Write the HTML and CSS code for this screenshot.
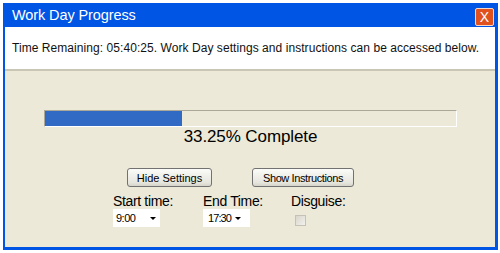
FILE: index.html
```html
<!DOCTYPE html>
<html>
<head>
<title>Work Day Progress</title>
<link rel="stylesheet" href="styles.css">
</head>
<body>
<div class="window">
  <div class="titlebar">
    <span class="title">Work Day Progress</span>
    <span class="close">X</span>
  </div>
  <div class="message">Time Remaining: 05:40:25. Work Day settings and instructions can be accessed below.</div>
  <div class="panel">
    <div class="track"><div class="fill" style="width: 33.25%"></div></div>
    <div class="percent">33.25% Complete</div>
    <div class="buttons">
      <button class="btn btn-hide">Hide Settings</button>
      <button class="btn btn-show">Show Instructions</button>
    </div>
    <div class="settings">
      <div class="field field-start">
        <div class="label">Start time:</div>
        <div class="select"><span>9:00</span><i class="arrow"></i></div>
      </div>
      <div class="field field-end">
        <div class="label">End Time:</div>
        <div class="select select-end"><span>17:30</span><i class="arrow"></i></div>
      </div>
      <div class="field field-disguise">
        <div class="label">Disguise:</div>
        <span class="checkbox"></span>
      </div>
    </div>
  </div>
</div>
</body>
</html>
```

FILE: styles.css
```css
body {
  margin: 0;
  background: #fff;
  font-family: "Liberation Sans", Arial, sans-serif;
}
.window {
  margin: 3px 2px 3px 3px;
  height: 247px;
  box-sizing: border-box;
  padding: 0 3px 3px 2px;
  background: #0055e5;
  display: flex;
  flex-direction: column;
}
.titlebar {
  height: 24px;
  display: flex;
  align-items: center;
  justify-content: space-between;
  padding-left: 7px;
}
.title {
  color: #fff;
  font-size: 14.5px;
  letter-spacing: -0.1px;
}
.close {
  width: 17px;
  height: 16px;
  margin-right: 1px;
  margin-top: 3px;
  border: 1px solid #f4d8cc;
  border-radius: 2px;
  background: #e0511e;
  color: #fff;
  font-size: 14px;
  line-height: 16px;
  text-align: center;
}
.message {
  height: 42px;
  background: #fff;
  padding-left: 7px;
  display: flex;
  align-items: center;
  font-size: 12px;
  letter-spacing: 0.06px;
  color: #111;
}
.panel {
  flex: 1;
  background: #ece9d8;
  border-top: 2px solid #c9c6b6;
  padding: 39px 38px 0 39px;
}
.track {
  height: 15px;
  border: 1px solid #fff;
  border-top-color: #aca899;
  border-left-color: #aca899;
  background: #ece9d8;
}
.fill {
  height: 100%;
  background: #316ac5;
}
.percent {
  text-align: center;
  font-size: 17px;
  line-height: 20px;
  letter-spacing: -0.1px;
  color: #000;
}
.buttons {
  display: flex;
  margin-top: 21px;
  padding-left: 83px;
  gap: 40px;
}
.btn {
  height: 19px;
  padding: 0;
  border: 1px solid #727272;
  border-radius: 3px;
  background: linear-gradient(#fbfbf8, #e6e5dd 80%, #d6d4ca);
  font-family: "Liberation Sans", Arial, sans-serif;
  font-size: 11px;
  color: #000;
}
.btn-hide {
  width: 85px;
}
.btn-show {
  width: 102px;
  letter-spacing: -0.4px;
}
.settings {
  display: flex;
  margin-top: 7px;
  padding-left: 69px;
}
.field {
  display: flex;
  flex-direction: column;
  align-items: flex-start;
}
.field-start {
  width: 90px;
}
.field-end {
  width: 88px;
}
.label {
  font-size: 14px;
  line-height: 15px;
  letter-spacing: -0.35px;
  color: #000;
}
.select {
  width: 47px;
  height: 18px;
  box-sizing: border-box;
  background: #fff;
  display: flex;
  align-items: center;
  padding: 0 4px 0 3px;
  font-size: 11px;
  letter-spacing: -0.5px;
}
.select-end {
  padding: 0 9px 0 5px;
  letter-spacing: -0.9px;
}
.arrow {
  width: 0;
  height: 0;
  margin-left: auto;
  margin-top: 1px;
  border-left: 3px solid transparent;
  border-right: 3px solid transparent;
  border-top: 3px solid #000;
}
.checkbox {
  width: 9px;
  height: 9px;
  margin: 6px 0 0 4px;
  border: 1px solid #c4c2b8;
  background: linear-gradient(135deg, #d8d6cc, #f2f1ec);
}
```
